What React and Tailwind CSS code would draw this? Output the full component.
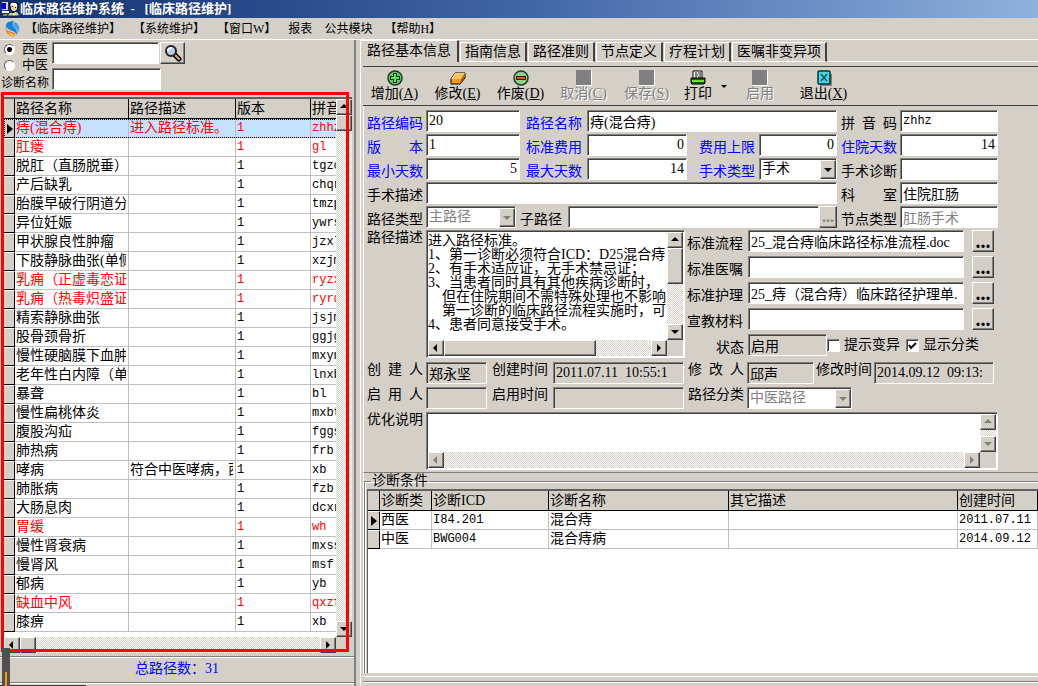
import React, { useState } from "react";

const paths = [
  { name: "痔(混合痔)", desc: "进入路径标准。", code: "zhhz", red: true },
  { name: "肛瘘", code: "gl", red: true },
  { name: "脱肛（直肠脱垂）", code: "tgzc" },
  { name: "产后缺乳", code: "chqr" },
  { name: "胎膜早破行阴道分", code: "tmzp" },
  { name: "异位妊娠", code: "ywrs" },
  { name: "甲状腺良性肿瘤", code: "jzxl" },
  { name: "下肢静脉曲张(单侧", code: "xzjm" },
  { name: "乳痈（正虚毒恋证", code: "ryzx", red: true },
  { name: "乳痈（热毒炽盛证", code: "ryrd", red: true },
  { name: "精索静脉曲张", code: "jsjm" },
  { name: "股骨颈骨折", code: "ggjg" },
  { name: "慢性硬脑膜下血肿", code: "mxyn" },
  { name: "老年性白内障（单", code: "lnxb" },
  { name: "暴聋", code: "bl" },
  { name: "慢性扁桃体炎", code: "mxbt" },
  { name: "腹股沟疝", code: "fggs" },
  { name: "肺热病", code: "frb" },
  { name: "哮病", desc: "符合中医哮病，西", code: "xb" },
  { name: "肺胀病", code: "fzb" },
  { name: "大肠息肉", code: "dcxr" },
  { name: "胃缓", code: "wh", red: true },
  { name: "慢性肾衰病", code: "mxss" },
  { name: "慢肾风", code: "msf" },
  { name: "郁病", code: "yb" },
  { name: "缺血中风", code: "qxzf", red: true },
  { name: "膝痹", code: "xb" },
];

const diagnoses = [
  { type: "西医", icd: "I84.201", name: "混合痔", other: "", time: "2011.07.11" },
  { type: "中医", icd: "BWG004", name: "混合痔病", other: "", time: "2014.09.12 09:13" },
];

const description = `进入路径标准。
1、第一诊断必须符合ICD：D25混合痔
2、有手术适应证，无手术禁忌证；
3、当患者同时具有其他疾病诊断时，
    但在住院期间不需特殊处理也不影响
    第一诊断的临床路径流程实施时，可
4、患者同意接受手术。`;

const tabs = ["路径基本信息", "指南信息", "路径准则", "节点定义", "疗程计划", "医嘱非变异项"];

const MONO = "font-['Liberation_Mono','Noto_Sans_CJK_SC',monospace] text-xs";
const SUNKEN =
  "border border-t-[#808080] border-l-[#808080] border-b-white border-r-white shadow-[inset_1px_1px_0_#404040]";
const RAISED =
  "border border-t-white border-l-white border-b-[#404040] border-r-[#404040] shadow-[inset_-1px_-1px_0_#808080] bg-[#d4d0c8]";
const TRACK =
  "bg-[repeating-conic-gradient(#ffffff_0_25%,#d4d0c8_0_50%)] bg-[length:2px_2px]";

const Arrow = ({ dir, gray }) => {
  const points = {
    up: "0,5 4,1 8,5",
    down: "0,2 8,2 4,6",
    left: "5,0 5,8 1,4",
    right: "2,0 2,8 6,4",
  };
  return (
    <svg width="8" height="8" viewBox="0 0 8 8" aria-hidden="true">
      <polygon points={points[dir]} fill={gray ? "#808080" : "#000"} />
    </svg>
  );
};

const ScrollButton = ({ dir, gray }) => (
  <button
    type="button"
    aria-label={dir}
    disabled={gray}
    className={`flex size-4 shrink-0 items-center justify-center ${RAISED}`}
  >
    <Arrow dir={dir} gray={gray} />
  </button>
);

const Label = ({ htmlFor, blue, children, className = "" }) => (
  <label
    htmlFor={htmlFor}
    className={`shrink-0 whitespace-pre leading-4 ${blue ? "text-[#0000ff]" : "text-black"} ${className}`}
  >
    {children}
  </label>
);

const TextInput = ({ id, value = "", mono, right, readOnly, gray, className = "" }) => (
  <input
    id={id}
    type="text"
    defaultValue={value}
    readOnly={readOnly}
    className={`h-[22px] min-w-0 px-[2px] leading-4 outline-none ${SUNKEN} ${
      readOnly ? "bg-[#d4d0c8]" : "bg-white"
    } ${gray ? "text-[#808080]" : "text-black"} ${mono ? MONO : ""} ${
      right ? "text-right" : ""
    } ${className}`}
  />
);

const SelectBox = ({ id, value, disabled, className = "" }) => (
  <div className={`relative h-[22px] shrink-0 bg-white ${SUNKEN} ${className}`}>
    <select
      id={id}
      disabled={disabled}
      defaultValue={value}
      className={`h-full w-full appearance-none bg-transparent pl-[2px] pr-5 leading-4 opacity-100 outline-none ${
        disabled ? "text-[#808080]" : "text-black"
      }`}
    >
      <option>{value}</option>
    </select>
    <span
      className={`pointer-events-none absolute bottom-0 right-0 top-px flex w-4 items-center justify-center ${RAISED}`}
    >
      <Arrow dir="down" gray={disabled} />
    </span>
  </div>
);

const DotsButton = ({ label, flat }) => (
  <button
    type="button"
    aria-label={label}
    disabled={flat}
    className={`flex h-[22px] shrink-0 items-center justify-center font-bold leading-4 ${RAISED} ${
      flat ? "w-[18px] text-base text-[#808080]" : "w-[22px] text-xl text-black"
    }`}
  >
    ...
  </button>
);

const AppIcon = () => (
  <svg width="17" height="16" viewBox="0 0 17 16" aria-hidden="true">
    <rect x="0" y="1" width="6" height="8" fill="#d4d0c8" />
    <rect x="0" y="2" width="4" height="6" fill="#0000d8" />
    <path d="M0 10h7v2H0z" fill="#fff" />
    <path d="M1 13h5v2H1z" fill="#808080" />
    <path d="M8 2l3-1 4 1 1 3-1 4-3 2-3-2-1-4z" fill="#fff" stroke="#000" />
    <path d="M9 4l6 2v2l-3 2-3-3z" fill="#ead66b" />
    <path d="M10 5h1v1h-1zM13 6h1v1h-1z" fill="#000" />
    <path d="M5 15l3-4 3 1 3-2 3 3v2z" fill="#c8c8c8" stroke="#222" />
    <path d="M11 12l1 3 1-3z" fill="#fff" />
  </svg>
);

const SwirlIcon = () => (
  <svg width="15" height="16" viewBox="0 0 15 16" aria-hidden="true">
    <path d="M1 6C0 2 4 0 9 0 7 2 7 4 9 6c2 2 4 5 3 8C10 9 4 10 1 6z" fill="#1583d8" />
    <path d="M9 1c4 1 6 4 5 8l-1 3C13 8 8 6 8 3z" fill="#41a9e8" />
    <path d="M0 6c1 5 6 4 9 6 2 1 1 3-1 4C4 15 0 11 0 6z" fill="#f07818" />
    <path d="M3 11c2 1 5 1 6 3l-1 2c-2-1-4-2-5-5z" fill="#f9c552" />
  </svg>
);

const SearchIcon = () => (
  <svg width="18" height="18" viewBox="0 0 18 18" aria-hidden="true">
    <path d="M10 10l5 5" stroke="#000" strokeWidth="5" strokeLinecap="round" />
    <path d="M11 11l4 4" stroke="#e8a848" strokeWidth="2" strokeLinecap="round" />
    <circle cx="7" cy="7" r="5" fill="#b4cef0" stroke="#202030" strokeWidth="2" />
    <path d="M4 7c0-2 2-3 4-3" fill="none" stroke="#fff" strokeWidth="2" />
  </svg>
);

const ToolIcon = ({ kind }) => {
  if (kind === "blank") return <span className="size-4 border-b border-r border-white bg-[#808080]" />;
  return (
    <svg width="16" height="16" viewBox="0 0 16 16" aria-hidden="true">
      {kind === "add" && (
        <>
          <circle cx="8" cy="8" r="7" fill="#73bf78" stroke="#173d1a" strokeWidth="1.5" />
          <path d="M6 3h4v3h3v4h-3v3H6v-3H3V6h3z" fill="#063c0c" />
          <path d="M7 4h2v3h3v2H9v3H7V9H4V7h3z" fill="#5ae85e" />
        </>
      )}
      {kind === "edit" && (
        <>
          <path d="M5 3h10v5l-5 6H1V9z" fill="#ff9a18" stroke="#000" />
          <path d="M5 3h10l-4 6H1z" fill="#ffc468" />
          <path d="M11 9l4-6v4l-5 6z" fill="#b85c00" />
        </>
      )}
      {kind === "void" && (
        <>
          <circle cx="8" cy="8" r="7" fill="#8fcf8c" stroke="#173d1a" strokeWidth="1.5" />
          <rect x="3" y="6" width="10" height="4" fill="#401000" />
          <rect x="4" y="7" width="8" height="2" fill="#d85c10" />
        </>
      )}
      {kind === "print" && (
        <>
          <path d="M3 1h9v8H3z" fill="#fff" stroke="#000" />
          <path d="M5 3h2m1 0h3M5 5h3m1 0h2M5 7h2m1 0h3" stroke="#000" />
          <path d="M1 8h14v5l-1 1H2l-1-1z" fill="#1d5c18" stroke="#000" />
          <path d="M2 11h12" stroke="#6de030" strokeWidth="2" />
        </>
      )}
      {kind === "exit" && (
        <>
          <path d="M4 15h11V4" fill="none" stroke="#808080" strokeWidth="2" />
          <rect x="2" y="1" width="12" height="13" rx="1" fill="#45d4dc" stroke="#00343a" strokeWidth="1.5" />
          <path d="M5 4l6 7M11 4l-6 7" stroke="#004858" strokeWidth="1.2" />
        </>
      )}
    </svg>
  );
};

const ToolButton = ({ kind, text, hotkey, disabled }) => (
  <button
    type="button"
    disabled={disabled}
    className={`flex flex-col items-center whitespace-nowrap leading-4 ${
      disabled ? "text-[#808080] [text-shadow:1px_1px_0_#fff]" : "text-black"
    } ${hotkey ? "w-[51px]" : "w-7"}`}
  >
    <ToolIcon kind={kind} />
    <span>
      {text}
      {hotkey && (
        <>
          (<u>{hotkey}</u>)
        </>
      )}
    </span>
  </button>
);

const HeadCell = ({ children }) => (
  <th className="h-5 overflow-hidden whitespace-nowrap border-b border-r border-black p-0 pl-px text-left font-normal leading-[18px]">
    {children}
  </th>
);

const Cell = ({ children, mono }) => (
  <td className={`h-[19px] border-b border-r border-[#c0c0c0] p-0 pl-px pr-[2px] leading-[18px] ${mono ? MONO : ""}`}>
    <div className="h-[18px] overflow-hidden whitespace-nowrap leading-[18px]">{children}</div>
  </td>
);

const MarkCell = ({ active }) => (
  <td className="border-b border-r border-black border-t border-t-white bg-[#d4d0c8] p-0">
    {active && (
      <svg width="8" height="10" viewBox="0 0 8 10" className="ml-[2px]" aria-hidden="true">
        <path d="M1 0l6 5-6 5z" fill="#000" />
      </svg>
    )}
  </td>
);

const SearchBar = ({ kind, setKind }) => (
  <div className="flex h-[52px] shrink-0 gap-1 pt-px">
    <div className="flex w-12 shrink-0 flex-col whitespace-nowrap leading-4">
      {["西医", "中医"].map((item) => (
        <label key={item} className="flex h-4 items-center justify-between pl-1 text-[13px]">
          <input
            type="radio"
            name="kind"
            value={item}
            checked={kind === item}
            onChange={() => setKind(item)}
            className="size-[11px] appearance-none rounded-full border border-b-white border-l-[#606060] border-r-white border-t-[#606060] bg-white checked:bg-[radial-gradient(circle,#000_2px,#fff_3px)]"
          />
          {item}
        </label>
      ))}
      <label htmlFor="diagName" className="mt-[2px] pl-px text-xs">
        诊断名称
      </label>
    </div>
    <div className="flex min-w-0 flex-col gap-1 pt-px">
      <div className="flex gap-px">
        <input aria-label="路径查询" type="text" className={`h-[22px] w-[107px] bg-white px-1 ${SUNKEN}`} />
        <button
          type="button"
          aria-label="查询"
          className={`flex h-[22px] w-[25px] items-center justify-center ${RAISED}`}
        >
          <SearchIcon />
        </button>
      </div>
      <input id="diagName" type="text" className={`h-[22px] w-[109px] bg-white px-1 ${SUNKEN}`} />
    </div>
  </div>
);

const PathGrid = ({ selected, setSelected }) => (
  <div className="relative flex min-h-0 flex-1 flex-col pb-px pl-1 pr-[2px] pt-[5px]">
    <div className="flex min-h-0 flex-1 flex-col border-t-2 border-[#606060]">
      <div className="flex min-h-0 flex-1">
        <div className="min-w-0 flex-1 overflow-hidden bg-white">
          <table className="w-[407px] table-fixed border-separate border-spacing-0">
            <colgroup>
              <col className="w-[11px]" />
              <col className="w-[114px]" />
              <col className="w-[107px]" />
              <col className="w-[75px]" />
              <col />
            </colgroup>
            <thead className="bg-[#d4d0c8]">
              <tr>
                <HeadCell />
                <HeadCell>路径名称</HeadCell>
                <HeadCell>路径描述</HeadCell>
                <HeadCell>版本</HeadCell>
                <HeadCell>拼音码</HeadCell>
              </tr>
            </thead>
            <tbody>
              {paths.map((row, i) => (
                <tr
                  key={i}
                  onClick={() => setSelected(i)}
                  className={`${row.red ? "text-[#ff0000]" : "text-black"} ${
                    selected === i ? "bg-[#c6e1ff] outline-1 -outline-offset-1 outline-dotted outline-black" : ""
                  }`}
                >
                  <MarkCell active={selected === i} />
                  <Cell>{row.name}</Cell>
                  <Cell>{row.desc}</Cell>
                  <Cell mono>1</Cell>
                  <Cell mono>{row.code}</Cell>
                </tr>
              ))}
            </tbody>
          </table>
        </div>
        <div className={`flex w-4 shrink-0 flex-col ${TRACK}`}>
          <ScrollButton dir="up" />
          <div className={`h-4 ${RAISED}`} />
          <div className="flex-1" />
          <ScrollButton dir="down" />
        </div>
      </div>
      <div className="flex h-4 shrink-0">
        <div className={`flex flex-1 ${TRACK}`}>
          <ScrollButton dir="left" />
          <div className={`w-4 ${RAISED}`} />
          <div className="flex-1" />
          <ScrollButton dir="right" />
        </div>
        <div className="w-4" />
      </div>
    </div>
    <div className="pointer-events-none absolute bottom-[2px] left-px right-[5px] top-0 border-[3px] border-[#ff0000]" />
  </div>
);

const MainForm = () => (
  <div className="flex shrink-0 flex-col gap-[2px] border-b border-[#808080] border-l border-l-white pb-[2px] pl-[3px] pr-10 pt-1">
    <div className="flex gap-1">
      <div className="flex min-w-0 flex-1 flex-col gap-[2px]">
        <div className="flex items-end">
          <Label htmlFor="code" blue className="w-[59px]">路径编码</Label>
          <TextInput id="code" value="20" className="w-[94px]" />
          <Label htmlFor="name" blue className="ml-[6px] w-[61px]">路径名称</Label>
          <TextInput id="name" value="痔(混合痔)" className="flex-1" />
        </div>
        <div className="flex items-end">
          <Label htmlFor="version" blue className="w-[59px]">版　　本</Label>
          <TextInput id="version" value="1" className="w-[94px]" />
          <Label htmlFor="fee" blue className="ml-[6px] w-[61px]">标准费用</Label>
          <TextInput id="fee" value="0" right className="w-[101px] flex-1" />
          <Label htmlFor="feeMax" blue className="ml-3 w-[60px]">费用上限</Label>
          <TextInput id="feeMax" value="0" right className="w-[78px]" />
        </div>
        <div className="flex items-end">
          <Label htmlFor="minDays" blue className="w-[59px]">最小天数</Label>
          <TextInput id="minDays" value="5" right className="w-[94px]" />
          <Label htmlFor="maxDays" blue className="ml-[6px] w-[61px]">最大天数</Label>
          <TextInput id="maxDays" value="14" right className="w-[101px] flex-1" />
          <Label htmlFor="opType" blue className="ml-3 w-[60px]">手术类型</Label>
          <SelectBox id="opType" value="手术" className="w-[78px]" />
        </div>
        <div className="flex items-end">
          <Label htmlFor="opDesc" className="w-[59px]">手术描述</Label>
          <TextInput id="opDesc" className="flex-1" />
        </div>
        <div className="flex items-end">
          <Label htmlFor="pathType" className="w-[59px]">路径类型</Label>
          <SelectBox id="pathType" value="主路径" disabled className="w-[90px]" />
          <Label htmlFor="subPath" className="ml-1 w-12">子路径</Label>
          <TextInput id="subPath" className="flex-1" />
          <DotsButton label="选择子路径" flat />
        </div>
      </div>
      <div className="flex w-[157px] shrink-0 flex-col gap-[2px]">
        <div className="flex items-end">
          <Label htmlFor="pinyin" className="w-[59px]">{"拼  音  码"}</Label>
          <TextInput id="pinyin" value="zhhz" mono className="flex-1" />
        </div>
        <div className="flex items-end">
          <Label htmlFor="stay" blue className="w-[59px]">住院天数</Label>
          <TextInput id="stay" value="14" right className="flex-1" />
        </div>
        <div className="flex items-end">
          <Label htmlFor="opDiag" className="w-[59px]">手术诊断</Label>
          <TextInput id="opDiag" className="flex-1" />
        </div>
        <div className="flex items-end">
          <Label htmlFor="dept" className="w-[59px]">科　　室</Label>
          <TextInput id="dept" value="住院肛肠" className="flex-1" />
        </div>
        <div className="flex items-end">
          <Label htmlFor="nodeType" className="w-[59px]">节点类型</Label>
          <TextInput id="nodeType" value="肛肠手术" gray className="flex-1" />
        </div>
      </div>
    </div>

    <div className="flex">
      <Label htmlFor="desc" className="w-[59px]">路径描述</Label>
      <div className={`flex h-[128px] min-w-0 flex-1 flex-col bg-white p-px ${SUNKEN}`}>
        <div className="flex min-h-0 flex-1">
          <textarea
            id="desc"
            defaultValue={description}
            wrap="off"
            className="min-w-0 flex-1 resize-none overflow-hidden whitespace-pre pt-[2px] leading-[14px] outline-none"
          />
          <div className={`flex w-4 flex-col ${TRACK}`}>
            <ScrollButton dir="up" />
            <div className={`h-9 ${RAISED}`} />
            <div className="flex-1" />
            <ScrollButton dir="down" />
          </div>
        </div>
        <div className="flex h-4 bg-[#d4d0c8]">
          <div className={`flex flex-1 ${TRACK}`}>
            <ScrollButton dir="left" />
            <div className={`w-[152px] ${RAISED}`} />
            <div className="flex-1" />
            <ScrollButton dir="right" />
          </div>
          <div className="w-4" />
        </div>
      </div>
      <div className="flex w-[313px] shrink-0 flex-col gap-1 pl-[2px]">
        {[
          ["标准流程", "25_混合痔临床路径标准流程.doc"],
          ["标准医嘱", ""],
          ["标准护理", "25_痔（混合痔）临床路径护理单."],
          ["宣教材料", ""],
        ].map(([label, value]) => (
          <div key={label} className="flex items-end">
            <Label htmlFor={label} className="w-[61px]">{label}</Label>
            <TextInput id={label} value={value} className="flex-1" />
            <span className="w-2" />
            <DotsButton label={`选择${label}`} />
            <span className="w-1" />
          </div>
        ))}
        <div className="flex items-end">
          <Label htmlFor="status" className="w-[61px] pr-1 text-right">状态</Label>
          <TextInput id="status" value="启用" readOnly className="w-[79px]" />
          <label className="flex h-[22px] items-center gap-1 whitespace-nowrap">
            <input type="checkbox" className={`size-[13px] appearance-none bg-white ${SUNKEN}`} />
            提示变异
          </label>
          <label className="relative ml-[6px] flex h-[22px] items-center gap-1 whitespace-nowrap">
            <input
              type="checkbox"
              defaultChecked
              className={`peer size-[13px] appearance-none bg-white ${SUNKEN}`}
            />
            <svg
              width="9"
              height="9"
              viewBox="0 0 9 9"
              className="pointer-events-none invisible absolute left-[2px] peer-checked:visible"
              aria-hidden="true"
            >
              <path d="M1 4l2 3 5-5" fill="none" stroke="#000" strokeWidth="2" />
            </svg>
            显示分类
          </label>
        </div>
      </div>
    </div>

    <div className="flex pt-[2px]">
      <Label htmlFor="creator" className="w-[59px]">{"创  建  人"}</Label>
      <TextInput id="creator" value="郑永坚" readOnly className="w-[61px]" />
      <Label htmlFor="created" className="ml-[5px] w-[61px]">创建时间</Label>
      <TextInput id="created" value="2011.07.11  10:55:1" readOnly className="flex-1" />
      <Label htmlFor="editor" className="ml-1 w-[59px]">{"修  改  人"}</Label>
      <TextInput id="editor" value="邱声" readOnly className="w-[67px]" />
      <Label htmlFor="edited" className="ml-[2px] w-[58px]">修改时间</Label>
      <TextInput id="edited" value="2014.09.12  09:13:" readOnly className="w-[120px]" />
      <span className="w-1" />
    </div>
    <div className="flex pt-px">
      <Label htmlFor="enabler" className="w-[59px]">{"启  用  人"}</Label>
      <TextInput id="enabler" readOnly className="w-[61px]" />
      <Label htmlFor="enabled" className="ml-[5px] w-[61px]">启用时间</Label>
      <TextInput id="enabled" readOnly className="flex-1" />
      <Label htmlFor="category" className="ml-1 w-[59px]">路径分类</Label>
      <SelectBox id="category" value="中医路径" disabled className="w-[105px]" />
      <span className="w-[146px]" />
    </div>
    <div className="flex pt-px">
      <Label htmlFor="note" className="w-[59px]">优化说明</Label>
      <div className={`flex h-[58px] min-w-0 flex-1 flex-col bg-white p-px ${SUNKEN}`}>
        <div className="flex min-h-0 flex-1">
          <textarea id="note" className="min-w-0 flex-1 resize-none overflow-hidden outline-none" />
          <div className={`flex w-4 flex-col justify-between ${TRACK}`}>
            <ScrollButton dir="up" gray />
            <ScrollButton dir="down" gray />
          </div>
        </div>
        <div className="flex h-4 bg-[#d4d0c8]">
          <div className={`flex flex-1 justify-between ${TRACK}`}>
            <ScrollButton dir="left" gray />
            <ScrollButton dir="right" gray />
          </div>
          <div className="w-4" />
        </div>
      </div>
    </div>
  </div>
);

const DiagnosisGrid = () => (
  <fieldset className="flex min-h-0 min-w-0 flex-1 flex-col border-l border-t border-[#808080] pl-[2px] shadow-[inset_1px_1px_0_#fff]">
    <legend className="ml-1 h-4 px-px leading-4">诊断条件</legend>
    <div className="min-h-0 flex-1 overflow-hidden border-l border-t-2 border-[#606060] bg-white">
      <table className="w-full table-fixed border-separate border-spacing-0">
        <colgroup>
          <col className="w-3" />
          <col className="w-[52px]" />
          <col className="w-[117px]" />
          <col className="w-[180px]" />
          <col className="w-[229px]" />
          <col />
        </colgroup>
        <thead className="bg-[#d4d0c8]">
          <tr>
            <HeadCell />
            <HeadCell>诊断类</HeadCell>
            <HeadCell>诊断ICD</HeadCell>
            <HeadCell>诊断名称</HeadCell>
            <HeadCell>其它描述</HeadCell>
            <HeadCell>创建时间</HeadCell>
          </tr>
        </thead>
        <tbody>
          {diagnoses.map((row, i) => (
            <tr key={row.icd}>
              <MarkCell active={i === 0} />
              <Cell>{row.type}</Cell>
              <Cell mono>{row.icd}</Cell>
              <Cell>{row.name}</Cell>
              <Cell>{row.other}</Cell>
              <Cell mono>{row.time}</Cell>
            </tr>
          ))}
        </tbody>
      </table>
    </div>
  </fieldset>
);

const App = () => {
  const [kind, setKind] = useState("西医");
  const [selected, setSelected] = useState(0);
  const [tab, setTab] = useState(tabs[0]);

  return (
    <div
      lang="zh-CN"
      className="flex h-screen flex-col overflow-hidden bg-[#d4d0c8] font-['Liberation_Serif','Noto_Sans_CJK_SC',serif] text-sm text-black"
    >
      <header className="flex h-[18px] shrink-0 items-center gap-px bg-linear-to-r from-[#12306f] via-[#4065a5] to-[#8fb1dd] pl-[2px] text-white">
        <AppIcon />
        <h1 className="whitespace-pre text-[13px] font-bold leading-4">临床路径维护系统  -   [临床路径维护]</h1>
      </header>

      <nav className="flex h-[21px] shrink-0 items-center gap-3 pl-[5px] text-xs leading-4">
        <div className="flex items-center gap-[5px]">
          <SwirlIcon />
          <a href="#path">【临床路径维护】</a>
        </div>
        <a href="#system">【系统维护】</a>
        <a href="#window">【窗口W】</a>
        <a href="#report">报表</a>
        <a href="#common">公共模块</a>
        <a href="#help">【帮助H】</a>
      </nav>

      <div className="flex min-h-0 flex-1 border-t border-white">
        <aside className="relative flex w-[356px] shrink-0 flex-col border-r-2 border-[#808080]">
          <SearchBar kind={kind} setKind={setKind} />
          <PathGrid selected={selected} setSelected={setSelected} />
          <footer className="mt-[2px] h-[27px] shrink-0 border-b border-t border-[#808080] text-center leading-6 text-[#0000ff] shadow-[inset_0_1px_0_#fff]">
            总路径数：31
          </footer>
          <div className="flex h-[3px] shrink-0 items-end border-t border-white">
            <span className="h-px w-[86px] bg-[#404040]" />
          </div>
          <div className="absolute bottom-0 left-[2px] h-[38px] w-2 bg-[#505050] pl-[3px] pt-6">
            <div className="h-full w-[2px] bg-[#ff9900]" />
          </div>
        </aside>

        <main className="ml-1 flex min-w-0 flex-1 flex-col border-l border-white">
          <div role="tablist" className="flex h-[22px] shrink-0 items-end gap-px">
            {tabs.map((item) => (
              <button
                key={item}
                type="button"
                role="tab"
                aria-selected={tab === item}
                onClick={() => setTab(item)}
                className={`shrink-0 whitespace-nowrap border-r-2 border-t border-[#404040] border-t-white leading-4 ${
                  tab === item
                    ? "h-[22px] px-[6px] pb-[2px]"
                    : "h-5 border-b border-l border-b-white border-l-white px-1"
                }`}
              >
                {item}
              </button>
            ))}
            <div className="h-px flex-1 bg-white" />
          </div>

          <div className="ml-[2px] mt-1 flex min-h-0 flex-1 flex-col border-t border-[#404040]">
            <div className="flex h-[39px] shrink-0 items-start gap-3 border-b border-[#404040] pl-[6px] pt-[3px]">
              <ToolButton kind="add" text="增加" hotkey="A" />
              <ToolButton kind="edit" text="修改" hotkey="E" />
              <ToolButton kind="void" text="作废" hotkey="D" />
              <ToolButton kind="blank" text="取消" hotkey="C" disabled />
              <ToolButton kind="blank" text="保存" hotkey="S" disabled />
              <div className="flex items-center gap-[2px]">
                <ToolButton kind="print" text="打印" />
                <button type="button" aria-label="打印选项" className="flex w-5 justify-center">
                  <svg width="6" height="3" viewBox="0 0 6 3" aria-hidden="true">
                    <path d="M0 0h6L3 3z" fill="#000" />
                  </svg>
                </button>
              </div>
              <ToolButton kind="blank" text="启用" disabled />
              <span className="w-0" />
              <ToolButton kind="exit" text="退出" hotkey="X" />
            </div>
            <MainForm />
            <div className="flex min-h-0 flex-1 flex-col border-l border-white">
              <DiagnosisGrid />
            </div>
            <div className="mt-[3px] h-[10px] shrink-0 border-t border-white">
              <div className="mt-1 border-b border-t border-b-white border-t-[#808080]" />
            </div>
          </div>
        </main>
      </div>
    </div>
  );
};

export default App;
